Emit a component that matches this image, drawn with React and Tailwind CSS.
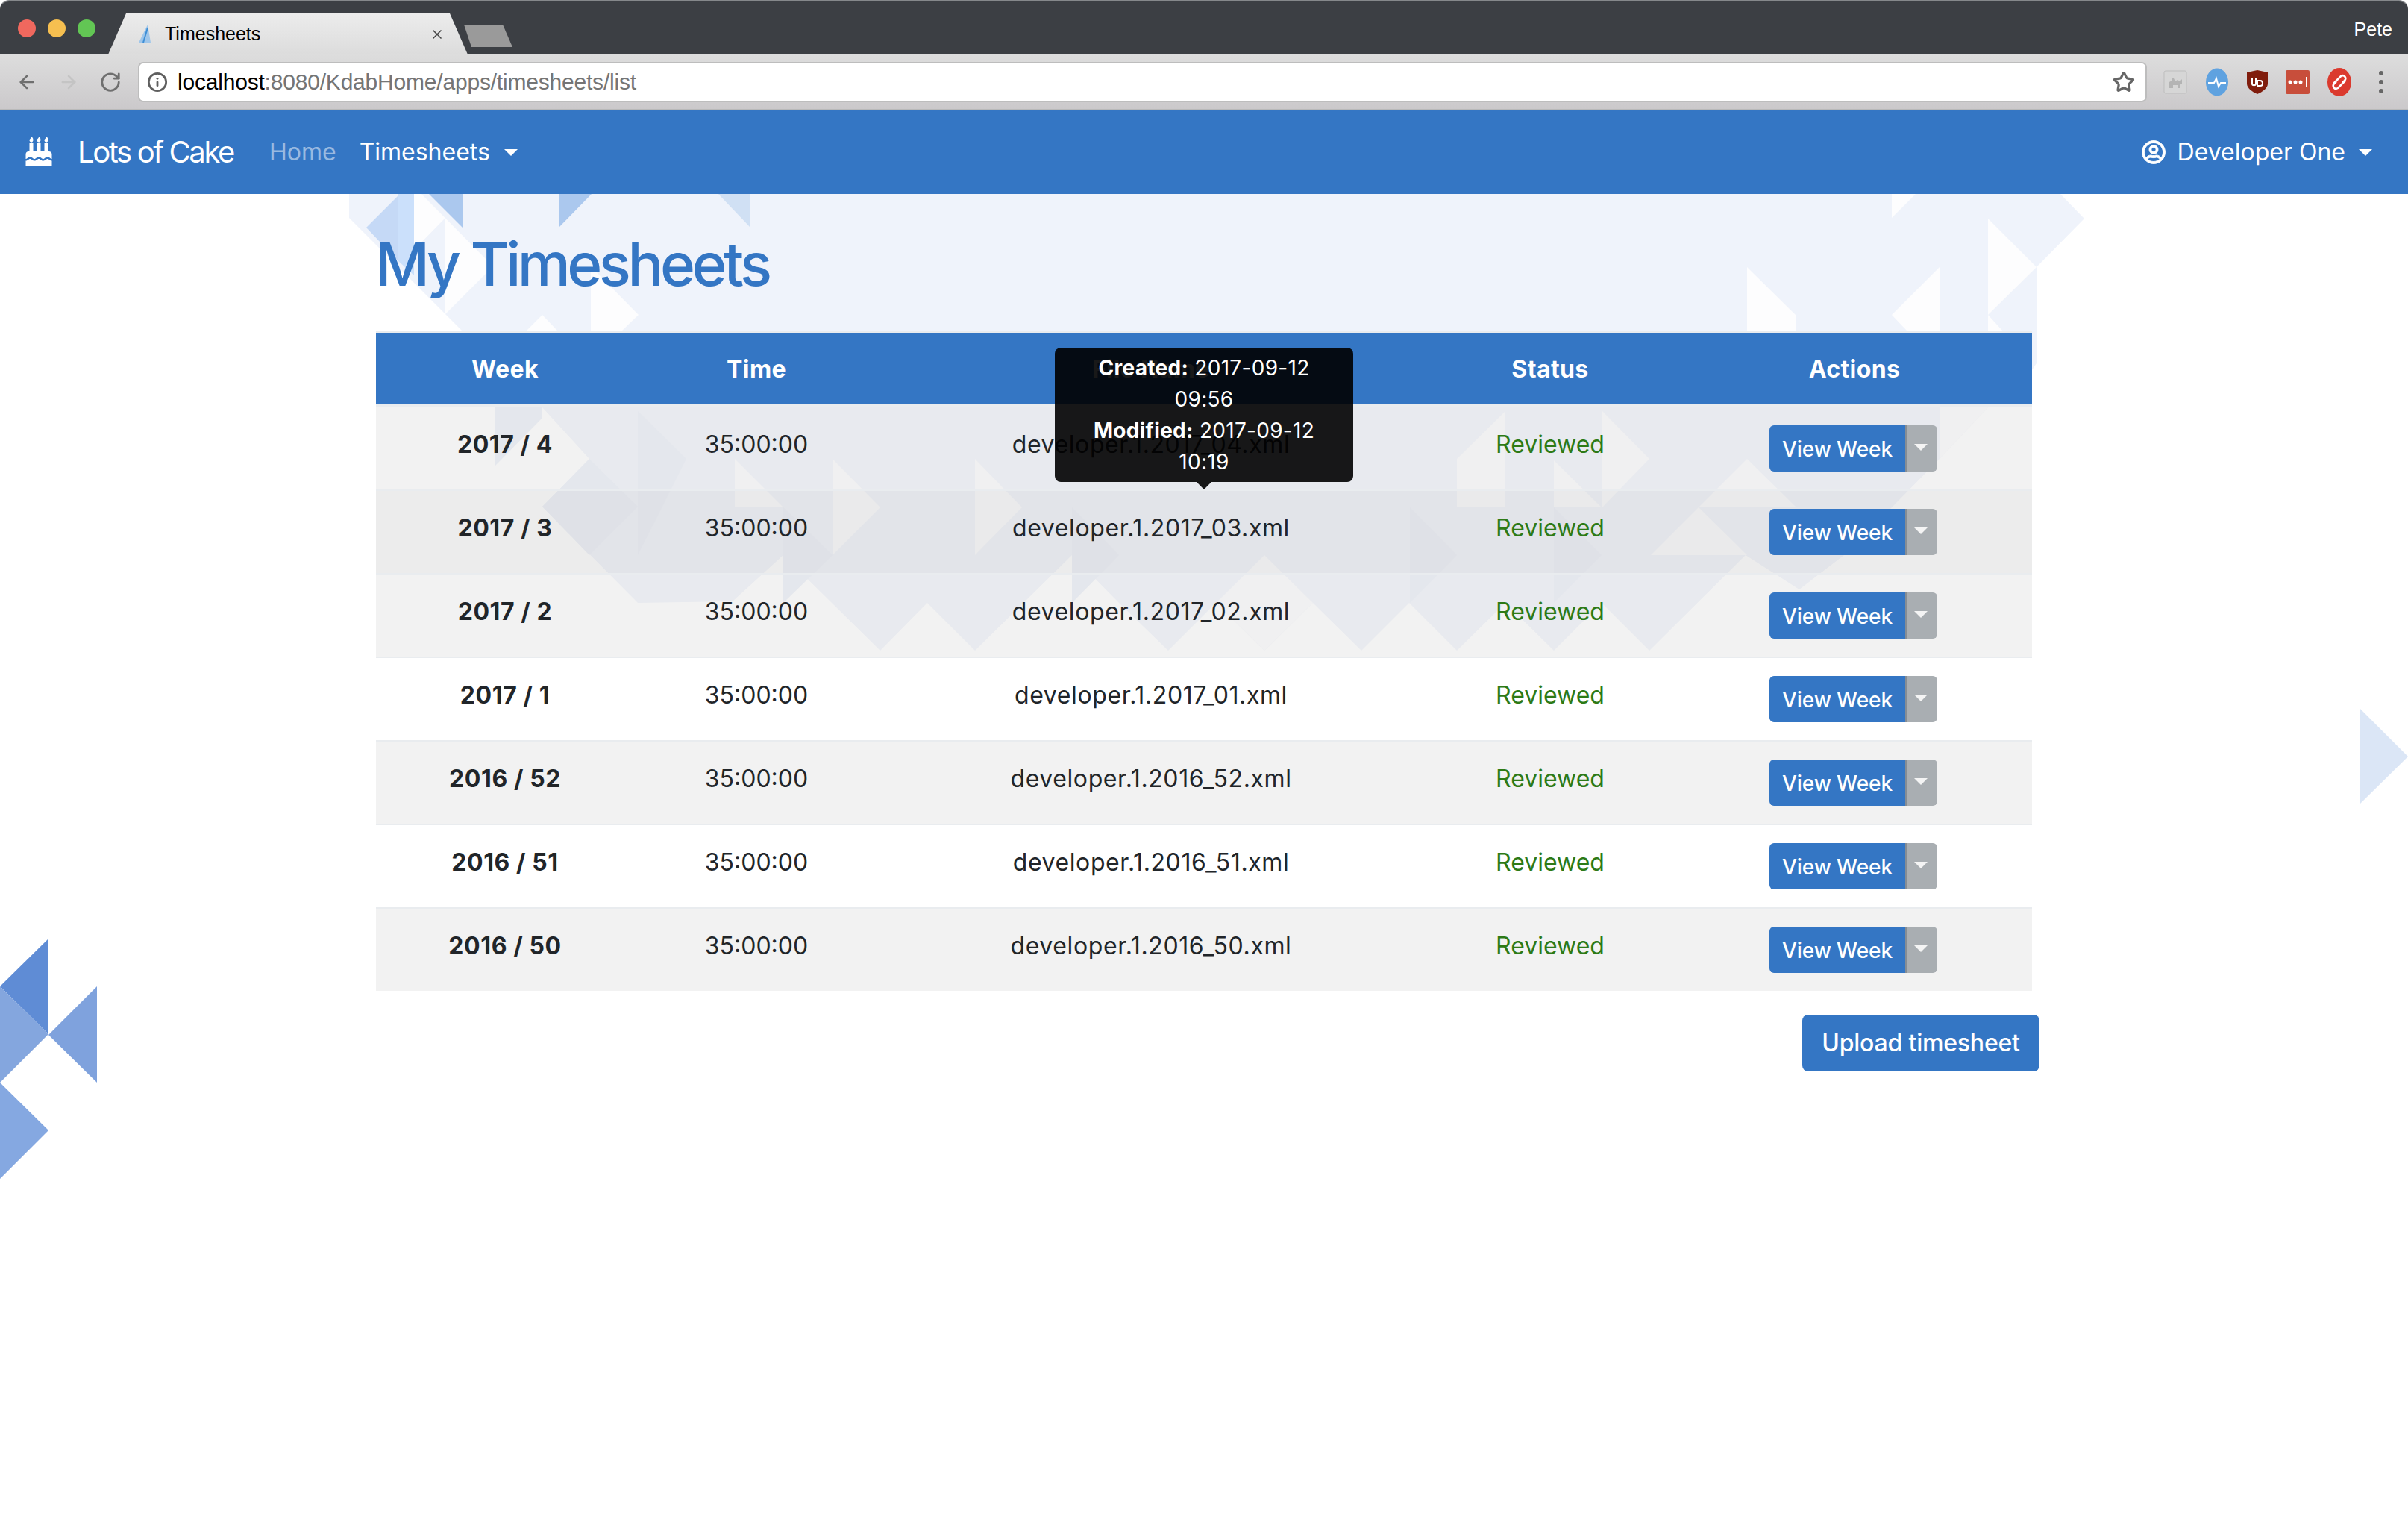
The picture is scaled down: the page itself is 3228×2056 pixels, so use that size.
import React from "react";
import { ArrowLeft, ArrowRight, RotateCw, Info, Star, X } from "lucide-react";
import { FaBirthdayCake, FaRegUserCircle } from "react-icons/fa";

const rows = [
  { week: "2017 / 4", file: "developer.1.2017_04.xml", hover: false },
  { week: "2017 / 3", file: "developer.1.2017_03.xml", hover: true },
  { week: "2017 / 2", file: "developer.1.2017_02.xml", hover: false },
  { week: "2017 / 1", file: "developer.1.2017_01.xml", plain: true },
  { week: "2016 / 52", file: "developer.1.2016_52.xml", hover: false },
  { week: "2016 / 51", file: "developer.1.2016_51.xml", plain: true },
  { week: "2016 / 50", file: "developer.1.2016_50.xml", hover: false },
];

// background triangles, in page coordinates
const Backdrop = () => (
  <svg className="absolute top-0 left-0" width="3228" height="2056" viewBox="0 0 3228 2056">
    <polygon
      fill="#eff3fb"
      points="468,260 2762,260 2794,293 2730,358 2730,487 2690,546 620,546 620,444 468,292"
    />
    <polygon
      fill="#f5f7fc"
      points="727,546 2665,546 2600,615 2536,680 2472,744 2412,790 2340,744 2211,872 2147,808 2083,872 2018,808 1953,872 1889,808 1825,872 1760,808 1695,872 1630,808 1566,872 1500,808 1437,744 1307,872 1243,808 1180,872 1050,744 982,806 855,808 727,679 790,615"
    />
    <polygon fill="#ffffff" points="620,444 727,546 620,546" />
    <g fill="#fdfdfe">
      <polygon points="555,260 565,260 661,357 597,421 597,292 555,335" />
      <polygon points="705,444 727,422 748,444" />
      <polygon points="792,357 856,422 833,444 792,444" />
      <polygon points="2342,358 2407,422 2407,444 2342,444" />
      <polygon points="2600,358 2536,422 2557,444 2600,444" />
      <polygon points="2665,293 2730,358 2665,422" />
      <polygon points="2665,422 2685,444 2665,444" />
      <polygon points="2536,260 2568,260 2536,292" />
      <polygon points="2018,551 1953,615 1953,680 2018,680" />
      <polygon points="2148,551 2211,615 2148,680" />
      <polygon points="2083,617 2147,680 2083,680" />
      <polygon points="2342,615 2408,680 2277,680" />
      <polygon points="2277,680 2342,744 2213,744" />
      <polygon points="2600,546 2665,546 2600,615" />
      <polygon points="985,615 1050,680 985,680" />
      <polygon points="1116,615 1180,680 1116,744" />
      <polygon points="1630,808 1695,744 1760,808 1695,872" />
      <polygon points="1307,615 1370,680 1307,744" />
    </g>
    <g fill="#f1f4fa">
      <polygon points="663,546 727,546 727,560 663,625" />
      <polygon points="727,679 790,615 855,679 790,744" />
      <polygon points="855,551 920,615 855,744" />
      <polygon points="1050,680 1116,744 1050,808" />
      <polygon points="1437,680 1500,744 1437,808" />
      <polygon points="1890,680 1953,744 1890,808" />
      <polygon points="2083,680 2147,744 2083,808" />
    </g>
    <polygon fill="#c5d9f6" points="491,305 536,260 533,349" />
    <polygon fill="#cbe0fb" points="533,260 555,260 555,369 533,349" />
    <polygon fill="#abc8ee" points="575,260 620,260 620,305" />
    <polygon fill="#abc8ee" points="749,260 793,260 749,305" />
    <polygon fill="#d0e0f4" points="963,260 1006,260 1006,305" />

    <polygon fill="#5f8cd5" points="0,1322 65,1258 65,1386" />
    <polygon fill="#84a6de" points="0,1322 65,1386 0,1451" />
    <polygon fill="#7fa2dd" points="65,1387 130,1322 130,1451" />
    <polygon fill="#85a8e1" points="0,1451 65,1515 0,1580" />
    <polygon fill="#dbe6f6" points="3164,950 3228,1014 3164,1077" />
  </svg>
);

const Caret = ({ className }) => (
  <span className={`inline-block w-0 h-0 border-x-[9px] border-x-transparent border-t-[9px] ${className}`} />
);

const Extensions = () => (
  <div className="flex items-center gap-[24px] ml-[22px]">
    <svg width="32" height="32" viewBox="0 0 32 32">
      <rect x="1" y="1" width="30" height="30" rx="2" fill="#d6d6d6" stroke="#bdbdbd" />
      <path d="M8 24v-8l3-2v-4l3 1 2 4 3-2 3 2 3-3v6l-3 2v4h-2v-4h-7v4z" fill="#b4b4b4" />
    </svg>
    <svg width="32" height="38" viewBox="0 0 32 38">
      <ellipse cx="16" cy="19" rx="15" ry="18.5" fill="#5fa2e0" />
      <path d="M4 20h8l3-6 3 11 3-5h7" fill="none" stroke="#fff" strokeWidth="2" />
    </svg>
    <svg width="28" height="32" viewBox="0 0 28 32">
      <path d="M14 0l14 3v15c0 6-7 11-14 14C7 29 0 24 0 18V3z" fill="#801d0d" />
      <path d="M7 10v8c0 3 5 3 5 0v-8M14 14h4c4 0 4 7 0 7h-4z" fill="none" stroke="#fff" strokeWidth="2" />
    </svg>
    <svg width="32" height="32" viewBox="0 0 32 32">
      <rect width="32" height="32" rx="2" fill="#c84e3b" />
      <circle cx="6" cy="16" r="2.5" fill="#fff" />
      <circle cx="13" cy="16" r="2.5" fill="#fff" />
      <circle cx="20" cy="16" r="2.5" fill="#fff" />
      <rect x="27" y="9" width="1.5" height="14" fill="#fff" />
    </svg>
    <svg width="32" height="38" viewBox="0 0 32 38">
      <ellipse cx="16" cy="19" rx="16" ry="19" fill="#db3a2e" />
      <path d="M8 21l10-10c5-3 8 3 5 6l-3 3M24 17L14 27c-5 3-8-3-5-6l3-3" fill="none" stroke="#fff" strokeWidth="2.5" />
    </svg>
    <svg width="8" height="32" viewBox="0 0 8 32" className="ml-[12px]">
      <circle cx="4" cy="4" r="3" fill="#666" />
      <circle cx="4" cy="16" r="3" fill="#666" />
      <circle cx="4" cy="28" r="3" fill="#666" />
    </svg>
  </div>
);

const BrowserChrome = () => (
  <div className="font-['Liberation_Sans',sans-serif]">
    <div className="h-[73px] bg-[#3c3f44] border-t-2 border-[#85888b] rounded-t-[12px] flex items-end pl-[24px] pr-[21px] relative">
      <div className="flex gap-[16px] self-start mt-[24px]">
        <span className="w-[24px] h-[24px] rounded-full bg-[#f0685e]" />
        <span className="w-[24px] h-[24px] rounded-full bg-[#f6bf50]" />
        <span className="w-[24px] h-[24px] rounded-full bg-[#62c654]" />
      </div>
      <div className="ml-[17px] w-[482px] h-[55px] bg-gradient-to-b from-[#ececec] to-[#dcdcdc] [clip-path:polygon(24px_0,458px_0,482px_100%,0_100%)] flex items-center pl-[39px] text-[25px] text-black">
        <svg width="20" height="26" viewBox="0 0 20 26" className="mr-[17px]">
          <path d="M14 0L2 24h16z" fill="#9fc6ea" />
          <path d="M14 4L8 24" stroke="#3f8fd6" strokeWidth="2" />
        </svg>
        <span>Timesheets</span>
        <X className="w-[20px] h-[20px] ml-[227px] text-[#444]" strokeWidth={2} />
      </div>
      <div className="ml-[-5px] mb-[10px] w-[65px] h-[30px] bg-[#9a9a9a] [clip-path:polygon(0_0,52px_0,100%_100%,10px_100%)]" />
      <span className="absolute right-[21px] top-[25px] text-[25px] leading-[25px] text-white">Pete</span>
    </div>
    <div className="h-[75px] bg-gradient-to-b from-[#dddddd] to-[#cbc9cb] border-b-2 border-[#b9b9b9] flex items-center pl-[22px] pr-[32px]">
      <ArrowLeft className="w-[28px] h-[28px] text-[#6f6f6f]" strokeWidth={2.2} />
      <ArrowRight className="w-[28px] h-[28px] text-[#c4c4c4] ml-[28px]" strokeWidth={2.2} />
      <RotateCw className="w-[30px] h-[30px] text-[#6f6f6f] ml-[27px]" strokeWidth={2.2} />
      <div className="ml-[22px] flex-1 h-[54px] bg-white border-2 border-[#bdbdbd] rounded-[7px] flex items-center pl-[10px] pr-[14px]">
        <Info className="w-[28px] h-[28px] text-[#5f5f5f]" strokeWidth={2.4} />
        <span className="ml-[13px] text-[30px] tracking-[-0.2px] text-black">
          localhost<span className="text-[#757575]">:8080/KdabHome/apps/timesheets/list</span>
        </span>
        <Star className="w-[30px] h-[30px] text-[#666] ml-auto" strokeWidth={2.6} />
      </div>
      <Extensions />
    </div>
  </div>
);

const Navbar = () => (
  <nav className="h-[112px] bg-[#3476c4] flex items-center pl-[32px] pr-[48px] text-[32px] text-white">
    <FaBirthdayCake className="w-[40px] h-[40px] mb-[2px]" />
    <span className="ml-[32px] text-[40px] tracking-[-2.4px]">Lots of Cake</span>
    <span className="ml-[48px] text-white/50">Home</span>
    <span className="ml-[31px]">Timesheets</span>
    <Caret className="ml-[19px] border-t-white" />
    <FaRegUserCircle className="ml-auto w-[32px] h-[32px] stroke-[14px]" />
    <span className="ml-[16px]">Developer One</span>
    <Caret className="ml-[18px] border-t-white" />
  </nav>
);

const ViewWeek = () => (
  <div className="inline-flex h-[62px] text-[28px] font-medium text-white align-top tracking-[-0.1px]">
    <span className="w-[182px] pt-[1px] bg-[#3476c4] rounded-l-[6px] flex items-center justify-center">View Week</span>
    <span className="w-[43px] bg-[#a9aeb2] border-l-2 border-[#868d94] rounded-r-[6px] flex items-center justify-center">
      <Caret className="border-t-[#f4f4f4] -ml-[3px] -mt-[4px]" />
    </span>
  </div>
);

export default function App() {
  return (
    <div className="relative h-[2056px] bg-white overflow-hidden font-['Inter',sans-serif] text-[#212529]">
      <Backdrop />
      <div className="relative">
        <BrowserChrome />
        <Navbar />
        <main className="w-[2220px] mx-auto">
          <h1 className="pt-[46px] pb-[42px] -ml-[1px] text-[80px] leading-[96px] font-medium tracking-[-4.5px] text-[#3476c4]">My Timesheets</h1>
          <div className="relative">
            <table className="w-full table-fixed border-separate border-spacing-0 text-[32px] leading-[48px] text-center">
              <thead>
                <tr className="bg-[#3476c4] text-white tracking-[0.4px]">
                  <th className="w-[346px] pt-[25px] pb-[23px] font-bold border-t-2 border-b-4 border-[#e9ecef]">Week</th>
                  <th className="w-[328px] pt-[25px] pb-[23px] font-bold border-t-2 border-b-4 border-[#e9ecef]">Time</th>
                  <th className="w-[730px] pt-[25px] pb-[23px] font-bold border-t-2 border-b-4 border-[#e9ecef]">File Name</th>
                  <th className="w-[340px] pt-[25px] pb-[23px] font-bold border-t-2 border-b-4 border-[#e9ecef]">Status</th>
                  <th className="w-[476px] pt-[25px] pb-[23px] font-bold border-t-2 border-b-4 border-[#e9ecef]">Actions</th>
                </tr>
              </thead>
              <tbody>
                {rows.map((row, i) => (
                  <tr key={row.week} className={row.plain ? "" : row.hover ? "bg-black/[.075]" : "bg-black/5"}>
                    <td className={`h-[110px] align-top pt-[26px] font-bold tracking-[0.6px] ${i ? "border-t-2 border-[#e9ecef]" : ""}`}>{row.week}</td>
                    <td className={`align-top pt-[26px] ${i ? "border-t-2 border-[#e9ecef]" : ""}`}>35:00:00</td>
                    <td className={`align-top pt-[26px] tracking-[0.6px] ${i ? "border-t-2 border-[#e9ecef]" : ""}`}>{row.file}</td>
                    <td className={`align-top pt-[26px] text-[#2d7a16] ${i ? "border-t-2 border-[#e9ecef]" : ""}`}>Reviewed</td>
                    <td className={`align-top pt-[24px] pb-[24px] pr-[3px] ${i ? "border-t-2 border-[#e9ecef]" : ""}`}><ViewWeek /></td>
                  </tr>
                ))}
              </tbody>
            </table>
            <div className="absolute left-[910px] top-[22px] w-[400px] py-[6px] px-[16px] rounded-[8px] bg-black/90 text-white text-center text-[28px] leading-[42px] tracking-[0.3px]">
              <div><b>Created:</b> 2017-09-12<br />09:56</div>
              <div><b>Modified:</b> 2017-09-12<br />10:19</div>
              <span className="absolute left-[190px] top-full w-0 h-0 border-x-[10px] border-x-transparent border-t-[10px] border-t-black/90" />
            </div>
          </div>
          <div className="flex justify-end mt-[32px] -mr-[10px]">
            <button className="h-[76px] w-[318px] rounded-[8px] bg-[#3476c4] text-white text-[32px] font-medium tracking-[-0.2px]">Upload timesheet</button>
          </div>
        </main>
      </div>
    </div>
  );
}
